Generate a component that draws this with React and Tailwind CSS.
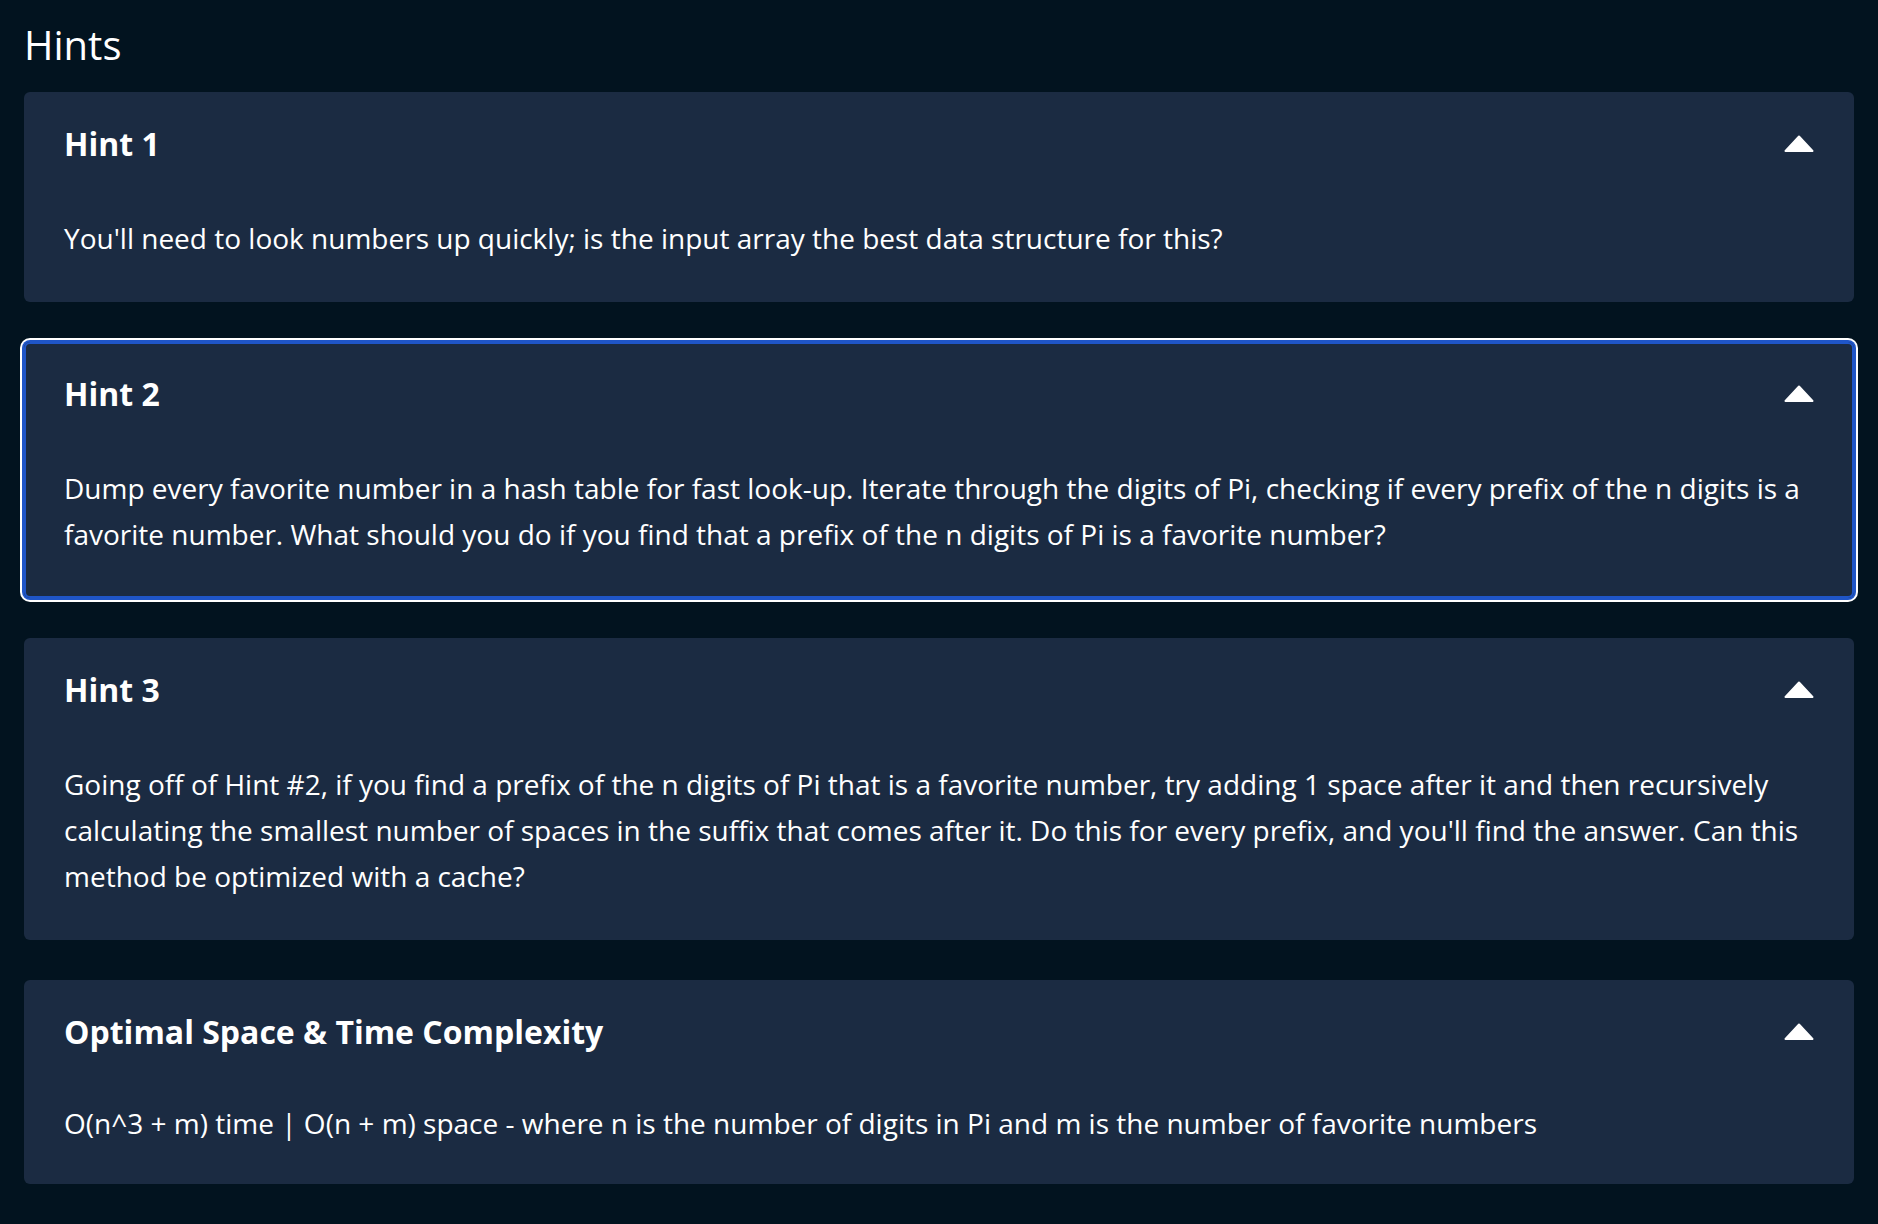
import React from "react";

const hints = [
  {
    title: "Hint 1",
    body: "You'll need to look numbers up quickly; is the input array the best data structure for this?",
  },
  {
    title: "Hint 2",
    body: "Dump every favorite number in a hash table for fast look-up. Iterate through the digits of Pi, checking if every prefix of the n digits is a favorite number. What should you do if you find that a prefix of the n digits of Pi is a favorite number?",
    focused: true,
  },
  {
    title: "Hint 3",
    body: "Going off of Hint #2, if you find a prefix of the n digits of Pi that is a favorite number, try adding 1 space after it and then recursively calculating the smallest number of spaces in the suffix that comes after it. Do this for every prefix, and you'll find the answer. Can this method be optimized with a cache?",
  },
  {
    title: "Optimal Space & Time Complexity",
    body: "O(n^3 + m) time | O(n + m) space - where n is the number of digits in Pi and m is the number of favorite numbers",
    compact: true,
  },
];

function Caret() {
  return (
    <svg width="30" height="18" viewBox="0 0 30 18" className="block">
      <path
        d="M15 1.5 L28.5 16 L1.5 16 Z"
        fill="#ffffff"
        stroke="#ffffff"
        strokeWidth="2"
        strokeLinejoin="round"
      />
    </svg>
  );
}

function HintCard({ title, body, focused, compact }) {
  const base = compact
    ? "rounded-[6px] bg-[#1b2b42] px-10 pt-[33px] pb-[38px]"
    : "rounded-[6px] bg-[#1b2b42] px-10 pt-[33px] pb-[41px]";
  return (
    <div
      className={
        focused
          ? base + " shadow-[inset_0_0_0_2px_#1f55c7,0_0_0_2px_#1f55c7,0_0_0_4px_#ffffff]"
          : base
      }
    >
      <div className="flex h-[38px] items-center justify-between">
        <h3 className="text-[32px] font-bold leading-[38px] text-white">{title}</h3>
        <Caret />
      </div>
      <p
        className={
          compact
            ? "mt-[49px] text-[28px] leading-[46px] text-white"
            : "mt-[52px] text-[28px] leading-[46px] text-white"
        }
      >
        {body}
      </p>
    </div>
  );
}

export default function App() {
  return (
    <div
      className="min-h-screen w-full bg-[#02131f] px-6 pt-[18px] pb-10"
      style={{ fontFamily: '"Open Sans", "Noto Sans", sans-serif' }}
    >
      <h2 className="text-[40px] font-normal leading-[54px] text-white">Hints</h2>
      <div className="mt-5 flex flex-col gap-10">
        {hints.map((h) => (
          <HintCard key={h.title} {...h} />
        ))}
      </div>
    </div>
  );
}
